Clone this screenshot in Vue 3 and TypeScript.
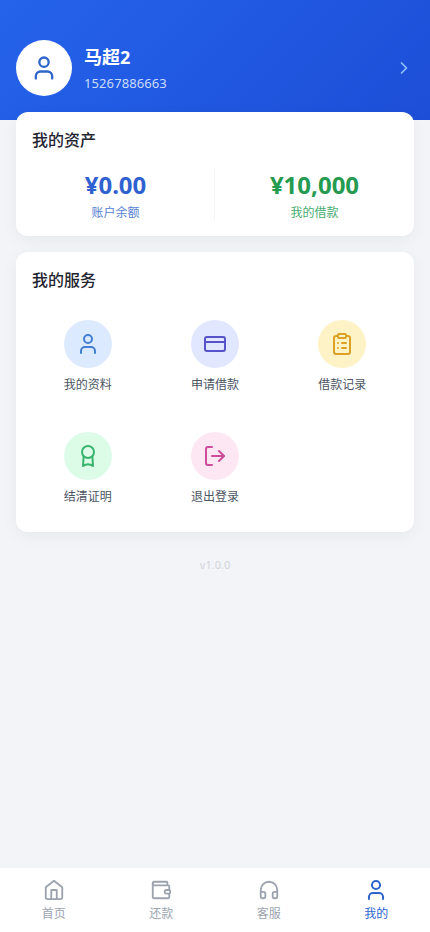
<script setup lang="ts">
interface Shape {
  paths: string[]
  circle?: [number, number, number]
}
interface Service {
  label: string
  icon: string
  tone: string
}
interface Tab {
  label: string
  icon: string
  active?: boolean
}

const icons: Record<string, Shape> = {
  user: { paths: ['M19 21v-2a4 4 0 0 0-4-4H9a4 4 0 0 0-4 4v2'], circle: [12, 7, 4] },
  card: { paths: ['M4 5h16a2 2 0 0 1 2 2v10a2 2 0 0 1-2 2H4a2 2 0 0 1-2-2V7a2 2 0 0 1 2-2z', 'M2 10h20'] },
  records: {
    paths: [
      'M9 2h6a1 1 0 0 1 1 1v2a1 1 0 0 1-1 1H9a1 1 0 0 1-1-1V3a1 1 0 0 1 1-1z',
      'M16 4h2a2 2 0 0 1 2 2v14a2 2 0 0 1-2 2H6a2 2 0 0 1-2-2V6a2 2 0 0 1 2-2h2',
      'M12 11h4M12 16h4M8 11h.01M8 16h.01',
    ],
  },
  award: {
    paths: ['M7.6 12.6 7 22c3.2-2.2 6.8-2.2 10 0l-.6-9.4'],
    circle: [12, 8, 6],
  },
  logout: { paths: ['M9 21H5a2 2 0 0 1-2-2V5a2 2 0 0 1 2-2h4', 'm16 17 5-5-5-5', 'M21 12H9'] },
  home: { paths: ['m3 9 9-7 9 7v11a2 2 0 0 1-2 2H5a2 2 0 0 1-2-2z', 'M9 22V12h6v10'] },
  wallet: {
    paths: [
      'M19 7V4a1 1 0 0 0-1-1H5a2 2 0 0 0 0 4h15a1 1 0 0 1 1 1v4h-3a2 2 0 0 0 0 4h3a1 1 0 0 0 1-1v-2a1 1 0 0 0-1-1',
      'M3 5v14a2 2 0 0 0 2 2h15a1 1 0 0 0 1-1v-4',
    ],
  },
  headphones: {
    paths: ['M3 14h3a2 2 0 0 1 2 2v3a2 2 0 0 1-2 2H5a2 2 0 0 1-2-2v-7a9 9 0 0 1 18 0v7a2 2 0 0 1-2 2h-1a2 2 0 0 1-2-2v-3a2 2 0 0 1 2-2h3'],
  },
}

const services: Service[] = [
  { label: '我的资料', icon: 'user', tone: 'blue' },
  { label: '申请借款', icon: 'card', tone: 'indigo' },
  { label: '借款记录', icon: 'records', tone: 'yellow' },
  { label: '结清证明', icon: 'award', tone: 'green' },
  { label: '退出登录', icon: 'logout', tone: 'pink' },
]

const tabs: Tab[] = [
  { label: '首页', icon: 'home' },
  { label: '还款', icon: 'wallet' },
  { label: '客服', icon: 'headphones' },
  { label: '我的', icon: 'user', active: true },
]
</script>

<template>
  <div class="page">
    <header class="header">
      <div class="avatar">
        <svg class="icon" viewBox="0 0 24 24">
          <circle cx="12" cy="7" r="4" />
          <path :d="icons.user.paths[0]" />
        </svg>
      </div>
      <div class="identity">
        <div class="name">马超2</div>
        <div class="phone">15267886663</div>
      </div>
      <svg class="icon chevron" viewBox="0 0 24 24"><path d="m9 18 6-6-6-6" /></svg>
    </header>

    <main class="content">
      <section class="card">
        <h2 class="title">我的资产</h2>
        <div class="assets">
          <div class="asset balance">
            <div class="amount">¥0.00</div>
            <div class="caption">账户余额</div>
          </div>
          <div class="divider"></div>
          <div class="asset loan">
            <div class="amount">¥10,000</div>
            <div class="caption">我的借款</div>
          </div>
        </div>
      </section>

      <section class="card">
        <h2 class="title">我的服务</h2>
        <div class="services">
          <div v-for="s in services" :key="s.label" class="service">
            <div class="bubble" :class="s.tone">
              <svg class="icon" viewBox="0 0 24 24">
                <circle v-if="icons[s.icon].circle" :cx="icons[s.icon].circle![0]" :cy="icons[s.icon].circle![1]" :r="icons[s.icon].circle![2]" />
                <path v-for="d in icons[s.icon].paths" :key="d" :d="d" />
              </svg>
            </div>
            <span class="label">{{ s.label }}</span>
          </div>
        </div>
      </section>

      <div class="version">v1.0.0</div>
    </main>

    <nav class="tabs">
      <div v-for="t in tabs" :key="t.label" class="tab" :class="{ active: t.active }">
        <svg class="icon" viewBox="0 0 24 24">
          <circle v-if="icons[t.icon].circle" :cx="icons[t.icon].circle![0]" :cy="icons[t.icon].circle![1]" :r="icons[t.icon].circle![2]" />
          <path v-for="d in icons[t.icon].paths" :key="d" :d="d" />
        </svg>
        <span class="tab-label">{{ t.label }}</span>
      </div>
    </nav>
  </div>
</template>

<style scoped>
.page {
  display: flex;
  flex-direction: column;
  height: 100vh;
  background: #f3f4f8;
  font-family: "Noto Sans", "Noto Sans CJK SC", sans-serif;
}
.icon {
  display: block;
  width: 24px;
  height: 24px;
  fill: none;
  stroke: currentColor;
  stroke-width: 2;
  stroke-linecap: round;
  stroke-linejoin: round;
}
.header {
  display: flex;
  align-items: center;
  box-sizing: border-box;
  height: 120px;
  padding: 16px 16px 0;
  background: linear-gradient(135deg, #2563eb, #1d4ed8);
  color: #fff;
}
.avatar {
  display: flex;
  align-items: center;
  justify-content: center;
  width: 56px;
  height: 56px;
  border-radius: 50%;
  background: #fff;
  color: #2f66c9;
}
.avatar .icon {
  width: 28px;
  height: 28px;
}
.identity {
  flex: 1;
  margin-left: 12px;
}
.name {
  font-size: 18px;
  line-height: 28px;
  font-weight: 700;
}
.phone {
  font-size: 13px;
  line-height: 20px;
  margin-top: 2px;
  letter-spacing: 0.1px;
  color: #cbdcfb;
}
.chevron {
  width: 20px;
  height: 20px;
  color: #93c5fd;
}
.content {
  display: flex;
  flex-direction: column;
  flex: 1;
  gap: 16px;
  margin-top: -8px;
  padding: 0 16px;
}
.card {
  box-sizing: border-box;
  padding: 16px;
  border-radius: 12px;
  background: #fff;
  box-shadow: 0 4px 16px rgba(0, 0, 0, 0.05);
}
.title {
  margin: 0;
  font-size: 16px;
  line-height: 25px;
  height: 24px;
  font-weight: 500;
  color: #1f2430;
}
.assets {
  display: grid;
  grid-template-columns: 1fr 2px 1fr;
  column-gap: 15px;
  margin-top: 16px;
}
.asset {
  height: 52px;
  text-align: center;
}
.divider {
  width: 1px;
  background: #f3f4f6;
}
.balance {
  color: #2f62d0;
}
.loan {
  color: #259b50;
}
.amount {
  font-size: 24px;
  line-height: 34px;
  font-weight: 700;
}
.caption {
  font-size: 12px;
  line-height: 18px;
  margin-top: 2px;
}
.balance .caption {
  color: #5580d2;
}
.loan .caption {
  color: #45ad6e;
}
.services {
  display: grid;
  grid-template-columns: repeat(3, 1fr);
  gap: 16px;
  margin-top: 16px;
}
.service {
  display: flex;
  flex-direction: column;
  align-items: center;
  box-sizing: border-box;
  height: 96px;
  padding-top: 12px;
}
.bubble {
  display: flex;
  align-items: center;
  justify-content: center;
  width: 48px;
  height: 48px;
  border-radius: 50%;
}
.blue { background: #dbeafe; color: #427fd3; }
.indigo { background: #e0e7ff; color: #5754cb; }
.yellow { background: #fef3c7; color: #dda126; }
.green { background: #dcfce7; color: #38b36c; }
.pink { background: #fce7f3; color: #cc4c99; }
.label {
  margin-top: 8px;
  font-size: 12px;
  line-height: 18px;
  color: #4b5563;
}
.version {
  margin-top: 8px;
  font-size: 11px;
  line-height: 18px;
  text-align: center;
  color: #d1d5db;
}
.tabs {
  display: grid;
  grid-template-columns: repeat(4, 1fr);
  box-sizing: border-box;
  height: 64px;
  padding-top: 11px;
  background: #fff;
  color: #9ca3af;
}
.tab {
  display: flex;
  flex-direction: column;
  align-items: center;
}
.tab .icon {
  width: 22px;
  height: 22px;
}
.tab-label {
  margin-top: 4px;
  font-size: 12px;
  line-height: 18px;
}
.active {
  color: #2d65ce;
}
.active .icon {
  transform: scale(1.1);
}
</style>
